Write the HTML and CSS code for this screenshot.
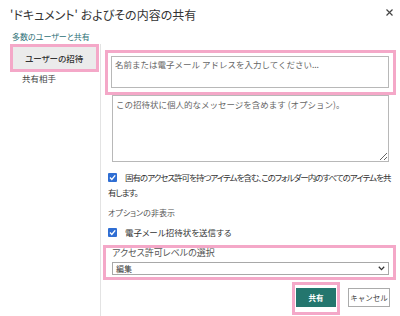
FILE: index.html
```html
<!DOCTYPE html>
<html lang="ja">
<head>
  <meta charset="UTF-8">
  <meta name="viewport" content="width=device-width, initial-scale=1.0">
  <title>共有</title>
  <link rel="stylesheet" href="styles.css">
</head>
<body>
  <div class="dialog">
    <!-- タイトル -->
    <div class="dialog-header">
      <h1 class="title">'ドキュメント' およびその内容の共有</h1>
      <button class="close" aria-label="閉じる">
        <svg width="7" height="7" viewBox="0 0 7 7"><path d="M0.5 0.5L6.5 6.5M6.5 0.5L0.5 6.5" stroke="#444" stroke-width="1.2"/></svg>
      </button>
    </div>
    <a class="link" href="#">多数のユーザーと共有</a>

    <div class="dialog-body">
      <!-- 左メニュー -->
      <nav class="nav">
        <div class="mark nav-mark">
          <div class="nav-item active">ユーザーの招待</div>
        </div>
        <div class="nav-item">共有相手</div>
      </nav>

      <!-- 招待フォーム -->
      <div class="content">
        <div class="mark input-mark">
          <input class="people" type="text" placeholder="名前または電子メール アドレスを入力してください...">
        </div>
        <textarea class="message" placeholder="この招待状に個人的なメッセージを含めます (オプション)。"></textarea>

        <p class="check-line">
          <span class="check"><svg width="9" height="9" viewBox="0 0 9 9"><path d="M2 4.6L3.8 6.4L7.2 2.4" fill="none" stroke="#fff" stroke-width="1.4"/></svg></span>固有のアクセス許可を持つアイテムを含む、このフォルダー内のすべてのアイテムを共有します。
        </p>
        <p class="hide-opt">オプションの非表示</p>
        <p class="check-line send">
          <span class="check"><svg width="9" height="9" viewBox="0 0 9 9"><path d="M2 4.6L3.8 6.4L7.2 2.4" fill="none" stroke="#fff" stroke-width="1.4"/></svg></span>電子メール招待状を送信する
        </p>

        <div class="mark level-mark">
          <div class="level-label">アクセス許可レベルの選択</div>
          <div class="select">
            <span>編集</span>
            <svg width="7" height="5" viewBox="0 0 7 5"><path d="M0.8 0.8L3.5 3.6L6.2 0.8" fill="none" stroke="#333" stroke-width="1.3"/></svg>
          </div>
        </div>

        <div class="actions">
          <div class="mark btn-mark">
            <button class="btn primary">共有</button>
          </div>
          <button class="btn cancel">キャンセル</button>
        </div>
      </div>
    </div>
  </div>
</body>
</html>
```

FILE: styles.css
```css
/* 全体 */
body {
  margin: 0;
  width: 400px;
  height: 316px;
  overflow: hidden;
  background: #ffffff;
  color: #444444;
  font-family: 'Noto Sans CJK JP', sans-serif;
  font-feature-settings: "palt";
}

/* ピンクの強調枠 */
.mark {
  border: 3px solid #f4a8c8;
  box-sizing: border-box;
}

/* ヘッダー */
.dialog-header {
  height: 30px;
  display: flex;
  align-items: center;
  justify-content: space-between;
  padding: 0 7px 0 10px;
}

.title {
  margin: 0;
  font-size: 12px;
  font-weight: 400;
  line-height: 1;
  color: #333333;
}

.close {
  align-self: flex-start;
  margin-top: 9px;
  padding: 0;
  border: none;
  background: none;
  line-height: 0;
}

.link {
  display: block;
  height: 14px;
  line-height: 14px;
  padding-left: 12px;
  font-size: 8px;
  color: #2d7076;
  text-decoration: none;
}

/* 本体 */
.dialog-body {
  display: flex;
  height: 272px;
}

.nav {
  width: 100px;
  padding-left: 10px;
  box-sizing: border-box;
}

.nav-mark {
  width: 89px;
}

.nav-item {
  font-size: 8.5px;
  line-height: 12px;
  padding-left: 12px;
}

.nav-item.active {
  background: #ebebeb;
  height: 22px;
  line-height: 22px;
  font-weight: 500;
  color: #333333;
}

.content {
  flex: 1;
  border-left: 1px solid #e3e3e3;
  padding: 6px 4px 0 4px;
}

.input-mark {
  padding: 3px 4px 4px 3px;
}

.people {
  display: block;
  width: 100%;
  height: 32px;
  box-sizing: border-box;
  margin: 0;
  padding: 0 3px 16px;
  border: 1px solid #b8b8b8;
  font-family: inherit;
  font-size: 8.5px;
}

.people::placeholder,
.message::placeholder {
  color: #666666;
}

.message {
  display: block;
  margin: 0 0 0 7px;
  width: 277px;
  height: 67px;
  box-sizing: border-box;
  padding: 2px 3px;
  border: 1px solid #b8b8b8;
  resize: vertical;
  font-family: inherit;
  font-size: 8.5px;
  line-height: 12px;
}

/* チェック項目 */
.check-line {
  margin: 8px 4px 0 3px;
  font-size: 8.5px;
  line-height: 15px;
  letter-spacing: -1px;
  color: #333333;
}

.check-line.send {
  margin-top: 5px;
  letter-spacing: 0;
}

.check {
  display: inline-block;
  width: 9px;
  height: 9px;
  margin-right: 8px;
  vertical-align: -1px;
  background: #2f6ed3;
  border-radius: 1px;
  line-height: 0;
}

.hide-opt {
  margin: 5px 0 0 3px;
  font-size: 8px;
  line-height: 15px;
  color: #555555;
}

/* アクセス許可レベル */
.level-mark {
  margin: 5px 0 0 -2px;
  padding: 0 4px 2px 6px;
}

.level-label {
  font-size: 9px;
  line-height: 10px;
  color: #555555;
}

.select {
  margin-top: 4px;
  height: 13px;
  box-sizing: border-box;
  border: 1px solid #a8a8a8;
  display: flex;
  align-items: center;
  justify-content: space-between;
  padding: 0 3px;
  font-size: 8px;
  color: #333333;
}

/* ボタン */
.actions {
  margin-top: 2px;
  display: flex;
  justify-content: flex-end;
  align-items: flex-start;
  padding-right: 6px;
}

.btn-mark {
  padding: 3px 1px 5px;
}

.btn {
  display: block;
  height: 19px;
  padding: 0;
  font-family: inherit;
  font-size: 7.5px;
}

.primary {
  width: 40px;
  border: none;
  background: #24766e;
  color: #ffffff;
  font-weight: 700;
}

.cancel {
  width: 42px;
  margin: 6px 0 0 8px;
  border: 1px solid #ababab;
  background: #ffffff;
  color: #444444;
}
```
